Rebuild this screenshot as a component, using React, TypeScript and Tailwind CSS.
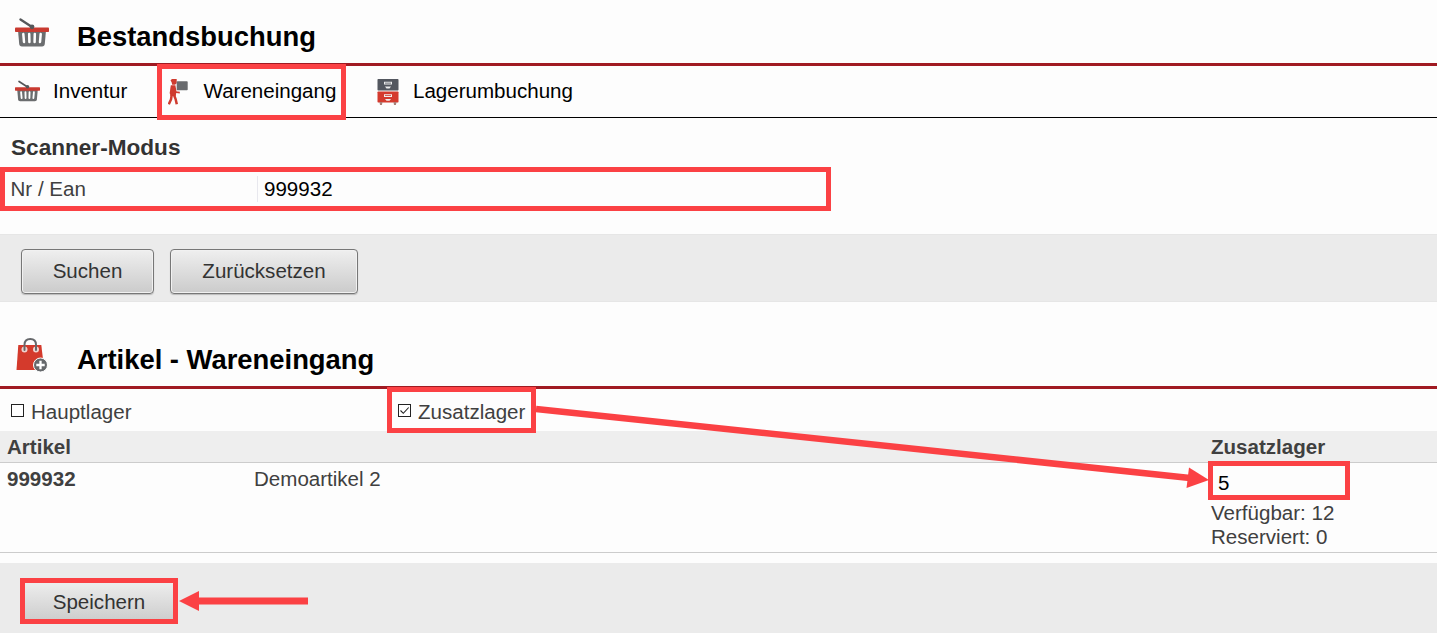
import type { ReactNode } from "react";

function BasketIcon({ className }: { className?: string }) {
  return (
    <svg viewBox="0 0 34 28" className={className} fill="none">
      <path d="M3 12h28l-1.200 13.300c-.2 1.900-1 2.700-2.800 2.700H7c-1.800 0-2.600-.8-2.800-2.700z" fill="#6b6d6f" />
      <path d="M8.300 15.500l.7 8M14.200 15.500l.2 8M19.800 15.500l-.2 8M25.700 15.500l-.7 8" stroke="#fff" strokeWidth="2.500" strokeLinecap="round" />
      <rect x="0" y="9" width="34" height="4.600" rx="0.800" fill="#c93a30" />
      <path d="M5.500 1L17 8.500" stroke="#55575a" strokeWidth="2.300" strokeLinecap="round" />
      <circle cx="17" cy="8.300" r="2.400" fill="#55575a" />
    </svg>
  );
}

function CourierIcon() {
  return (
    <svg viewBox="0 0 20 26" className="h-[26px] w-5" fill="none">
      <path d="M2.500 1.200L4 0h4.700v4.200L7 5.800H4.200l-.6-2.600z" fill="#cf3b2f" />
      <path d="M2.800 6.300h4.600l1.100 6.200-.8 4.500H2.500L1.700 14z" fill="#cf3b2f" />
      <path d="M6 8.500l1.500 4.600 4.300.6" stroke="#cf3b2f" strokeWidth="1.700" />
      <path d="M3.700 16L3 20.500.8 25.300M6 16l1.600 4 1.200 5.200" stroke="#cf3b2f" strokeWidth="2.500" />
      <rect x="8.700" y="2.300" width="11" height="9" rx="0.800" fill="#696b6e" />
    </svg>
  );
}

function CabinetIcon() {
  return (
    <svg viewBox="0 0 22 26" className="h-[26px] w-[22px]">
      <rect x="0.500" y="0" width="21" height="11.500" rx="0.700" fill="#53575f" />
      <rect x="0.500" y="12.500" width="21" height="11" rx="0.700" fill="#d43a2e" />
      <path d="M2.500 23h3l-.6 3H3zM16.500 23h3l-.6 3H17z" fill="#a98079" />
      <path d="M7 2.800h8v2.700H7zM7 15.300h8V18H7z" fill="#eee" />
      <path d="M8 3.700h6v.8H8z" fill="#53575f" />
      <path d="M8 16.200h6v.8H8z" fill="#d43a2e" />
      <path d="M8 7.500h6L12.500 9.500h-3zM8 20h6l-1.500 1.800h-3z" fill="#eee" />
    </svg>
  );
}

function BagIcon() {
  return (
    <svg viewBox="0 0 32 34" className="ml-px h-[34px] w-8" fill="none">
      <path d="M2.300 7h23l3 25H.5z" fill="#d43a2c" />
      <circle cx="8.500" cy="11.500" r="3" fill="#f0d2ce" />
      <circle cx="20" cy="11.500" r="3" fill="#f0d2ce" />
      <path d="M8.500 12V6.800C8.500 3 11 1 14.300 1S20 3 20 6.800V12" stroke="#66686b" strokeWidth="2" strokeLinecap="round" />
      <circle cx="24.500" cy="27" r="7" fill="#66696c" stroke="#fff" strokeWidth="1" />
      <path d="M24.500 22.800v8.400M20.300 27h8.400" stroke="#fff" strokeWidth="2.300" />
    </svg>
  );
}

function Heading({ icon, children, className }: { icon: ReactNode; children: ReactNode; className: string }) {
  return (
    <div className={`flex border-b-3 border-[#a01a22] pl-[15px] ${className}`}>
      <div className="w-[62px]">{icon}</div>
      <h1 className="mt-[5px] text-[27.400px] leading-8 font-bold text-black">{children}</h1>
    </div>
  );
}

function Button({ className, children }: { className?: string; children: ReactNode }) {
  return (
    <button
      className={`h-[45px] rounded-[4px] border border-[#777] bg-linear-to-b from-[#efefef] to-[#cbcbcb] text-[#333] shadow-[inset_0_0_0_1px_#f1f1f1,0_1px_1px_#bbb] ${className}`}
    >
      {children}
    </button>
  );
}

function Checkbox({ label, checked }: { label: string; checked?: boolean }) {
  return (
    <label className="flex items-center gap-[7px] leading-6">
      <svg viewBox="0 0 13 13" className="mb-[3px] size-[13px]" fill="none">
        <rect x="0.500" y="0.500" width="12" height="12" fill="#fff" stroke="#222" />
        {checked && <path d="M2.500 6.500l2.800 2.800L10.700 3.500" stroke="#222" strokeWidth="1.100" />}
      </svg>
      {label}
    </label>
  );
}

export default function App() {
  return (
    <div className="relative h-[633px] w-[1437px] overflow-hidden bg-[#fdfdfd] font-['Liberation_Sans',Arial,sans-serif] text-[20.550px] text-[#404040]">
      <Heading className="h-[66px] pt-[16px]" icon={<BasketIcon className="mt-[2px] h-[29px] w-[34px]" />}>
        Bestandsbuchung
      </Heading>

      <nav className="flex h-[52px] items-center border-b border-black pl-[15px] text-black">
        <a className="flex w-[142px] items-center">
          <BasketIcon className="mr-[13px] mb-[2px] h-[22px] w-[25px]" />
          Inventur
        </a>
        <a className="-my-1 flex h-14 w-[189px] items-center border-5 border-[#fb4144] pl-[6px] whitespace-nowrap">
          <CourierIcon />
          <span className="ml-[15.500px]">Wareneingang</span>
        </a>
        <a className="ml-[31px] flex items-center">
          <CabinetIcon />
          <span className="ml-[14px]">Lagerumbuchung</span>
        </a>
      </nav>

      <section className="h-[116px] pt-[17px]">
        <h2 className="pl-[11px] text-[22.600px] leading-[26px] font-bold text-[#333]">Scanner-Modus</h2>
        <div className="mt-[6px] flex h-11 w-[831px] items-center border-5 border-[#fb4144] pl-[5.500px]">
          <span className="w-[246.500px]">Nr / Ean</span>
          <span className="flex h-[26px] flex-1 items-center border-l border-[#e8e8ee] pl-[6px] text-black">999932</span>
        </div>
      </section>

      <div className="flex h-[68px] gap-4 border-y border-[#e6e6e6] bg-[#ebebeb] pt-[14px] pl-[21px]">
        <Button className="w-[133px]">Suchen</Button>
        <Button className="w-[188px]">Zurücksetzen</Button>
      </div>

      <Heading className="h-[87px] pt-[36px]" icon={<BagIcon />}>
        <span className="mt-px block">Artikel - Wareneingang</span>
      </Heading>

      <div className="flex h-[42px] pl-[11px]">
        <div className="w-[376px] pt-[11px]">
          <Checkbox label="Hauptlager" />
        </div>
        <div className="relative -mt-[2px] h-[46px] w-[149px] border-5 border-[#fb4144] pt-[8px] pl-[6px]">
          <Checkbox label="Zusatzlager" checked />
        </div>
      </div>

      <div className="flex h-8 border-b border-[#ccc] bg-[#eee] pt-1 pl-[7px] leading-6 font-bold">
        <span className="w-[1204px]">Artikel</span>
        <span>Zusatzlager</span>
      </div>
      <div className="flex h-[90px] border-b border-[#ccc] pl-[7px] leading-6">
        <span className="w-[247px] pt-1 font-bold">999932</span>
        <span className="w-[954px] pt-1">Demoartikel 2</span>
        <div className="-mt-[2px]">
          <div className="h-[39px] w-[142px] border-5 border-[#fb4144] pt-[5px] pl-[5px] text-black">5</div>
          <div className="pt-px pl-[3px]">
            <p>Verfügbar: 12</p>
            <p>Reserviert: 0</p>
          </div>
        </div>
      </div>

      <div className="mt-[10px] h-[70px] bg-[#ebebeb] pt-[15px] pl-5">
        <button className="h-[46px] w-[158px] border-5 border-[#fb4144] bg-linear-to-b from-[#ededed] to-[#cecece] pt-[2px] text-[#333]">
          Speichern
        </button>
      </div>

      {/* Arrows pointing at the quantity field and the save button */}
      <svg viewBox="0 0 1437 633" className="pointer-events-none absolute inset-0 h-full w-full" fill="#fb4144">
        <path d="M536 409L1190 478" stroke="#fb4144" strokeWidth="6.500" />
        <path d="M1209 480l-22.500 8 2.500-20.500z" />
        <path d="M197 601h111" stroke="#fb4144" strokeWidth="7" />
        <path d="M179 601l20-10v20z" />
      </svg>
    </div>
  );
}
